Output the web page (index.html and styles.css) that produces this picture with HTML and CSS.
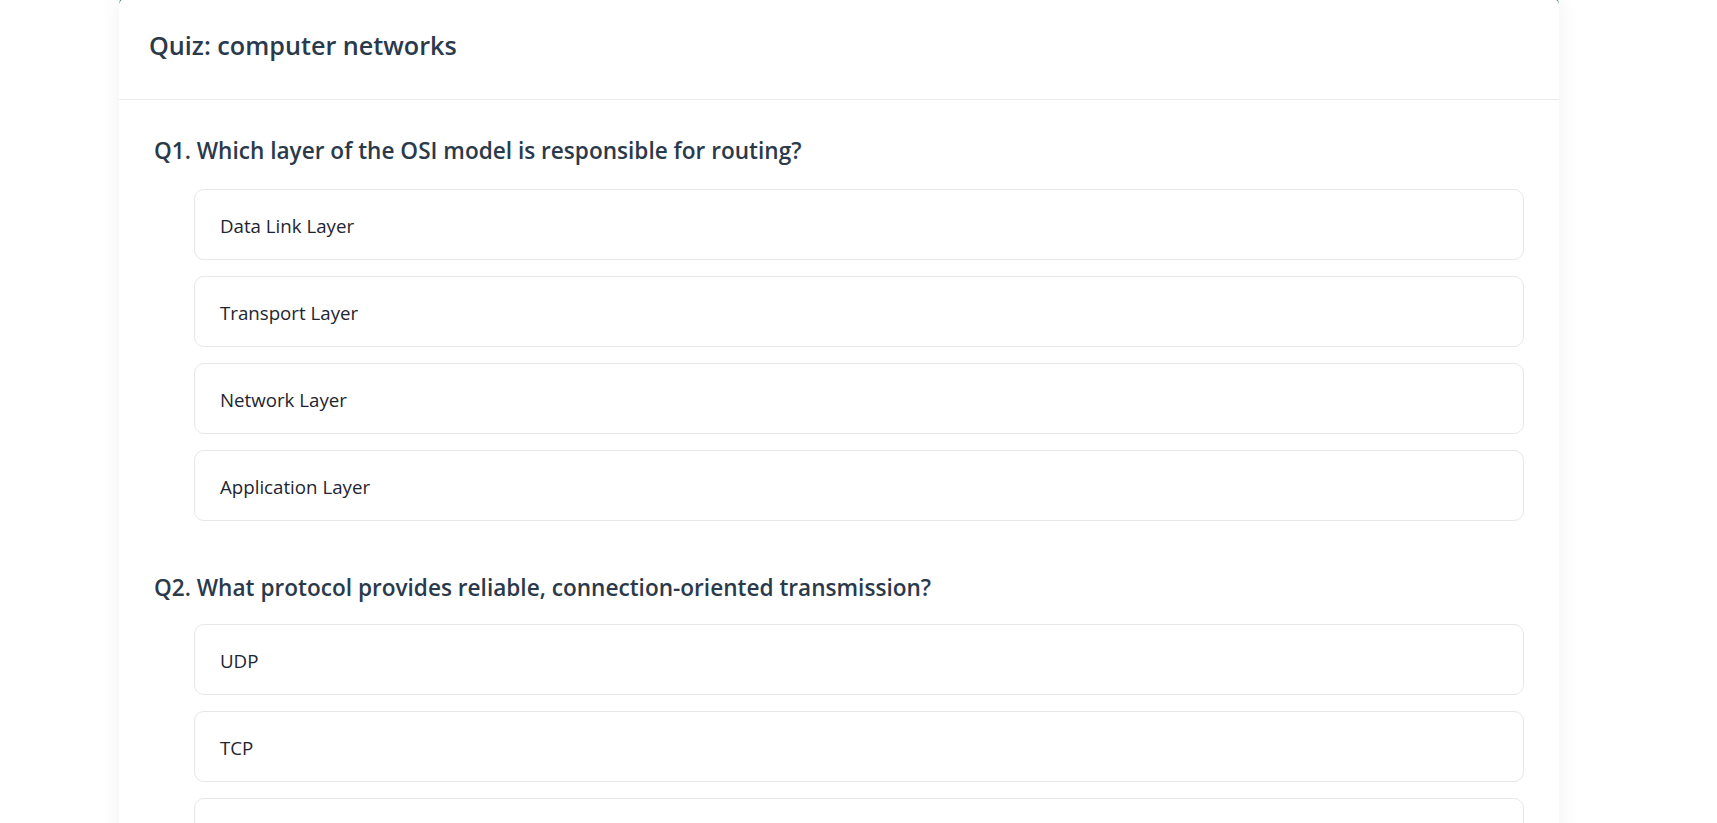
FILE: index.html
```html
<!DOCTYPE html>
<html lang="en">
<head>
<meta charset="utf-8">
<title>Quiz: computer networks</title>
<link rel="stylesheet" href="styles.css">
</head>
<body>
<div class="page">
  <div class="card">
    <div class="card-header">
      <h1 class="title">Quiz: computer networks</h1>
    </div>
    <div class="card-body">
      <div class="question">
        <h2 class="q-text">Q1. Which layer of the OSI model is responsible for routing?</h2>
        <div class="options">
          <div class="option">Data Link Layer</div>
          <div class="option">Transport Layer</div>
          <div class="option">Network Layer</div>
          <div class="option">Application Layer</div>
        </div>
      </div>
      <div class="question">
        <h2 class="q-text">Q2. What protocol provides reliable, connection-oriented transmission?</h2>
        <div class="options">
          <div class="option">UDP</div>
          <div class="option">TCP</div>
          <div class="option">ICMP</div>
          <div class="option">ARP</div>
        </div>
      </div>
    </div>
  </div>
</div>
<script src="script.js"></script>
</body>
</html>
```
FILE: styles.css
```css
html, body {
  margin: 0;
  padding: 0;
  background: #ffffff;
}
body {
  font-family: "Open Sans", "Noto Sans", sans-serif;
  color: #2c3e50;
}
.page {
  padding: 13px 0 60px 119px;
}
.card {
  width: 1440px;
  background: #ffffff;
  border-top: 4px solid #3e7d57;
  border-radius: 12px;
  box-shadow: 0 2px 22px rgba(0, 0, 0, 0.06);
}
.card-header {
  padding: 32px 30px 0 30px;
  height: 70px;
  border-bottom: 1px solid #e9ecef;
}
.title {
  margin: 0;
  font-size: 25.2px;
  line-height: 32px;
  font-weight: 600;
  color: #2a3a4b;
}
.card-body {
  padding: 36px 35px 0 35px;
}
.question {
  margin-bottom: 52px;
}
.q-text {
  margin: 0 0 23px 0;
  font-size: 22.6px;
  line-height: 30px;
  font-weight: 600;
  color: #2a3a4b;
}
.question + .question .q-text {
  margin-bottom: 21px;
}
.options {
  margin-left: 40px;
  display: flex;
  flex-direction: column;
  gap: 16px;
}
.option {
  height: 68px;
  box-sizing: content-box;
  display: flex;
  align-items: center;
  padding: 1px 25px 0 25px;
  border: 1px solid #e6e8e4;
  border-radius: 10px;
  font-size: 18.7px;
  color: #1e2530;
  background: #ffffff;
}
```
FILE: script.js
```js
window.scrollTo(0, 20);
```
